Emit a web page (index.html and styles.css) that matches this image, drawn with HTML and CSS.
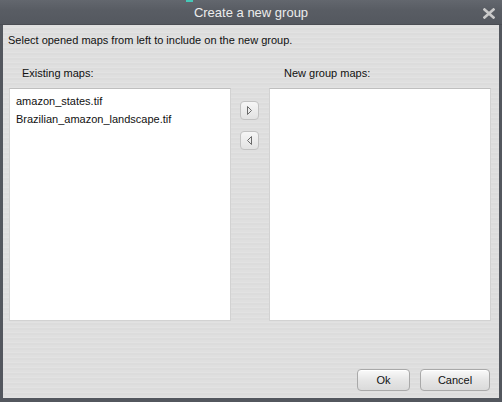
FILE: index.html
```html
<!DOCTYPE html>
<html>
<head>
<meta charset="utf-8">
<link rel="stylesheet" href="styles.css">
</head>
<body>
<div class="window">
  <div class="titlebar">
    <span class="accent"></span>
    <span class="title">Create a new group</span>
    <svg class="close" width="12" height="11" viewBox="0 0 12 11"><path d="M1.5 1.5 L10.5 9.5 M10.5 1.5 L1.5 9.5" stroke="#c9c9c9" stroke-width="2.6" stroke-linecap="square"/></svg>
  </div>
  <div class="body">
    <div class="intro">Select opened maps from left to include on the new group.</div>
    <div class="panes">
      <div class="pane">
        <div class="label label-left">Existing maps:</div>
        <div class="list">
          <div class="item">amazon_states.tif</div>
          <div class="item">Brazilian_amazon_landscape.tif</div>
        </div>
      </div>
      <div class="mid">
        <button class="arrow"><svg width="7" height="9" viewBox="0 0 7 9"><path d="M1.5 0.5 L1.5 8.5 L5.5 4.5 Z" fill="none" stroke="#6a6a6a" stroke-width="1"/></svg></button>
        <button class="arrow"><svg width="7" height="9" viewBox="0 0 7 9"><path d="M5.5 0.5 L5.5 8.5 L1.5 4.5 Z" fill="none" stroke="#6a6a6a" stroke-width="1"/></svg></button>
      </div>
      <div class="pane">
        <div class="label label-right">New group maps:</div>
        <div class="list"></div>
      </div>
    </div>
    <div class="spacer"></div>
    <div class="footer">
      <button class="btn btn-ok">Ok</button>
      <button class="btn btn-cancel">Cancel</button>
    </div>
  </div>
</div>
</body>
</html>
```
FILE: styles.css
```css
html, body {
  margin: 0;
  padding: 0;
  background: #ffffff;
}
.window {
  width: 502px;
  height: 402px;
  display: flex;
  flex-direction: column;
  font-family: "Liberation Sans", Arial, sans-serif;
  font-size: 11px;
  color: #111111;
}
.titlebar {
  height: 25px;
  flex: none;
  position: relative;
  display: flex;
  align-items: center;
  justify-content: center;
  background: linear-gradient(#63676e, #595d64 40%, #54585f);
  border-bottom: 1px solid #4a4d53;
  box-sizing: border-box;
}
.accent {
  position: absolute;
  left: 186px;
  top: 0;
  width: 7px;
  height: 2px;
  background: #45c8b8;
}
.title {
  color: #ececec;
  font-size: 13px;
  padding-top: 1px;
}
.close {
  position: absolute;
  right: 7px;
  top: 8px;
}
.body {
  flex: 1;
  display: flex;
  flex-direction: column;
  border-left: 3px solid #53575e;
  border-right: 3px solid #53575e;
  border-bottom: 4px solid #53575e;
  background-color: #dfdfdf;
  background-image: repeating-linear-gradient(0deg, rgba(255,255,255,0.10) 0px, rgba(255,255,255,0.10) 1px, rgba(0,0,0,0) 1px, rgba(0,0,0,0) 3px, rgba(0,0,0,0.015) 3px, rgba(0,0,0,0.015) 5px);
}
.intro {
  padding: 9px 0 0 5px;
  line-height: 13px;
}
.panes {
  display: flex;
  padding: 20px 8px 0 6px;
}
.pane {
  width: 222px;
  display: flex;
  flex-direction: column;
}
.label {
  line-height: 13px;
  margin-bottom: 8px;
}
.label-left { padding-left: 13px; }
.label-right { padding-left: 15px; }
.list {
  height: 228px;
  background: #ffffff;
  border: 1px solid #d2d2d2;
  border-top-color: #bfbfbf;
  padding-top: 3px;
  box-sizing: content-box;
}
.item {
  line-height: 18px;
  padding-left: 6px;
}
.mid {
  width: 38px;
  display: flex;
  flex-direction: column;
  align-items: flex-start;
  padding: 34px 0 0 9px;
  box-sizing: border-box;
  gap: 11px;
}
.arrow {
  width: 19px;
  height: 19px;
  padding: 0;
  margin: 0;
  border: 1px solid #c2c2c2;
  border-radius: 4px;
  background: linear-gradient(#f6f6f6, #e2e2e2);
  display: flex;
  align-items: center;
  justify-content: center;
}
.spacer { flex: 1; }
.footer {
  display: flex;
  justify-content: flex-end;
  gap: 10px;
  padding: 0 9px 7px 0;
}
.btn {
  height: 22px;
  margin: 0;
  padding: 0;
  font-family: "Liberation Sans", Arial, sans-serif;
  font-size: 11px;
  color: #111111;
  border: 1px solid #a9a9a9;
  border-radius: 4px;
  background: linear-gradient(#fafafa, #e6e6e6 50%, #dadada);
  box-shadow: inset 0 1px 0 #ffffff;
}
.btn-ok { width: 53px; }
.btn-cancel { width: 70px; }
```
